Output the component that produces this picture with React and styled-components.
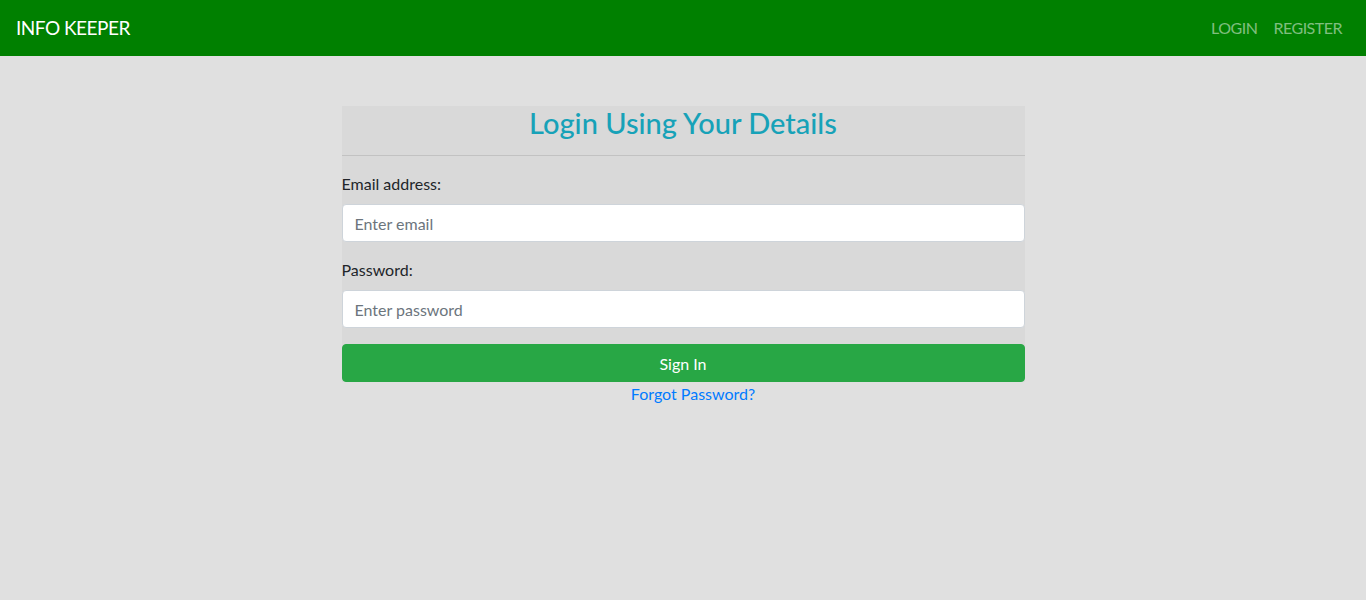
import styled, { createGlobalStyle } from "styled-components";

const GlobalStyle = createGlobalStyle`
  * {
    box-sizing: border-box;
  }

  body {
    margin: 0;
    background-color: #e0e0e0;
    font-family: Lato, "Noto Sans", sans-serif;
    font-size: 16px;
    line-height: 1.5;
    color: #212529;
  }
`;

function App() {
  return (
    <>
      <GlobalStyle />
      <Navbar>
        <Brand href="#">INFO KEEPER</Brand>
        <NavLinks>
          <NavLink href="#">LOGIN</NavLink>
          <NavLink href="#">REGISTER</NavLink>
        </NavLinks>
      </Navbar>
      <Main>
        <LoginCard>
          <Title>Login Using Your Details</Title>
          <Divider />
          <FormGroup>
            <Label htmlFor="email">Email address:</Label>
            <Input id="email" type="email" placeholder="Enter email" />
          </FormGroup>
          <FormGroup>
            <Label htmlFor="password">Password:</Label>
            <Input id="password" type="password" placeholder="Enter password" />
          </FormGroup>
          <SignInButton type="button">Sign In</SignInButton>
        </LoginCard>
        <ForgotRow>
          <ForgotLink href="#">Forgot Password?</ForgotLink>
        </ForgotRow>
      </Main>
    </>
  );
}

export default App;

const Navbar = styled.nav`
  display: flex;
  justify-content: space-between;
  align-items: center;
  height: 56px;
  padding: 8px 16px;
  background-color: #008000;
`;

const Brand = styled.a`
  color: #fff;
  font-size: 19px;
  line-height: 30px;
  letter-spacing: -0.5px;
  text-decoration: none;
`;

const NavLinks = styled.div`
  display: flex;
  align-items: center;
`;

const NavLink = styled.a`
  padding: 8px;
  color: rgba(255, 255, 255, 0.5);
  font-size: 16px;
  letter-spacing: -0.5px;
  text-decoration: none;
`;

const Main = styled.main`
  width: 50%;
  margin: 50px auto 0;
`;

const LoginCard = styled.form`
  display: flex;
  flex-direction: column;
  background-color: #d9d9d9;
`;

const Title = styled.h3`
  margin: 0;
  padding-top: 1px;
  color: #17a2b8;
  font-size: 29px;
  font-weight: 500;
  line-height: 32px;
  text-align: center;
`;

const Divider = styled.hr`
  width: 100%;
  margin: 16px 0;
  border: 0;
  border-top: 1px solid rgba(0, 0, 0, 0.1);
`;

const FormGroup = styled.div`
  display: flex;
  flex-direction: column;
  margin-bottom: 16px;
`;

const Label = styled.label`
  margin-bottom: 8px;
`;

const Input = styled.input`
  height: 38px;
  padding: 6px 12px;
  border: 1px solid #ced4da;
  border-radius: 4px;
  background-color: #fff;
  color: #495057;
  font-family: inherit;
  font-size: 16px;

  &::placeholder {
    color: #6c757d;
  }
`;

const SignInButton = styled.button`
  height: 38px;
  border: 1px solid #28a745;
  border-radius: 4px;
  background-color: #28a745;
  color: #fff;
  font-family: inherit;
  font-size: 16px;
  cursor: pointer;
`;

const ForgotRow = styled.div`
  padding-left: 20px;
  text-align: center;
`;

const ForgotLink = styled.a`
  color: #007bff;
  text-decoration: none;
`;
